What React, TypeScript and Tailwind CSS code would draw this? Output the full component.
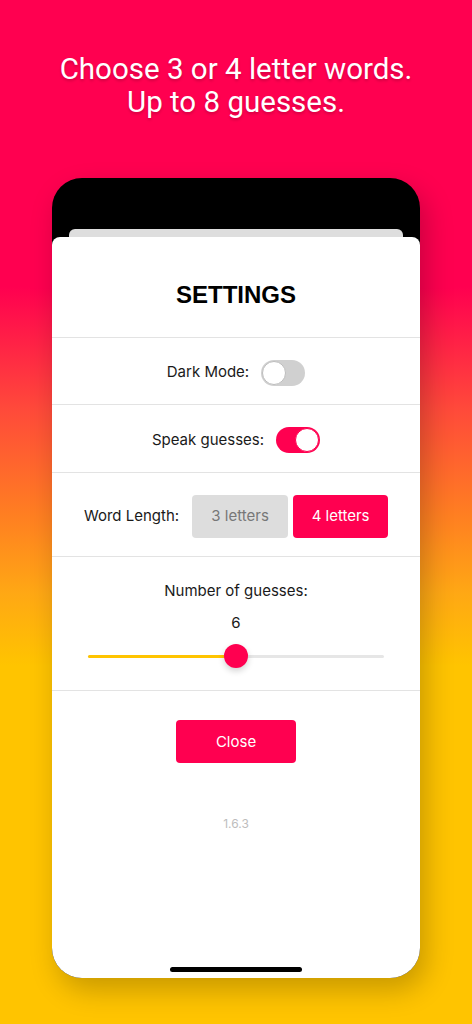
import React from 'react';

const PINK = 'bg-[#ff0050]';

const Toggle: React.FC<{ on?: boolean }> = ({ on = false }) => (
  <div
    className={`w-[44px] h-[26px] rounded-full flex items-center p-[1px] ${
      on ? `${PINK} justify-end` : 'bg-[#d0d0d0] justify-start'
    }`}
  >
    <div
      className={`w-[24px] h-[24px] rounded-full bg-white border ${
        on ? 'border-[#ff0050]' : 'border-[#bdbdbd]'
      }`}
    />
  </div>
);

const Row: React.FC<{ children: React.ReactNode; className?: string }> = ({ children, className = '' }) => (
  <div className={`flex items-center justify-center border-b border-[#e3e3e3] pt-[3px] ${className}`}>{children}</div>
);

export default function App() {
  const value = 6;
  const pct = 50;

  return (
    <div className="relative w-full h-[1024px] overflow-hidden bg-[linear-gradient(180deg,#ff0050_0%,#ff0050_28%,#ff4a3a_40%,#ff7d22_50%,#ffa814_58%,#ffc400_65%,#ffc400_100%)] font-['Inter',sans-serif]">
      <h1 className="pt-[53px] text-center text-white text-[29.5px] leading-[33px] font-['Roboto',sans-serif] [text-shadow:0_2px_3px_rgba(0,0,0,0.18)]">
        Choose 3 or 4 letter words.
        <br />
        Up to 8 guesses.
      </h1>

      <div className="mt-[59px] ml-[52px] w-[368px] h-[800px] rounded-[30px] bg-black overflow-hidden flex flex-col pt-[51px] shadow-[6px_12px_28px_rgba(0,0,0,0.22)]">
        <div className="mx-[17px] h-[8px] rounded-t-[6px] bg-[#dedede]" />
        <div className="flex-1 flex flex-col bg-white rounded-t-[8px] relative">
          <div className="h-[101px] flex items-end justify-center pb-[28px] border-b border-[#e3e3e3]">
            <h2 className="text-[24px] leading-[28px] font-bold text-black font-['Liberation_Sans',sans-serif]">SETTINGS</h2>
          </div>

          <Row className="h-[67px] gap-[12px]">
            <span className="text-[15px] text-[#1a1a1a]">Dark Mode:</span>
            <Toggle />
          </Row>

          <Row className="h-[68px] gap-[12px]">
            <span className="text-[15px] text-[#1a1a1a]">Speak guesses:</span>
            <Toggle on />
          </Row>

          <Row className="h-[84px]">
            <span className="text-[15px] text-[#1a1a1a] mr-[13px]">Word Length:</span>
            <button className="w-[96px] h-[43px] rounded-[4px] bg-[#dddddd] text-[15px] text-[#777777]">3 letters</button>
            <button className={`ml-[5px] w-[95px] h-[43px] rounded-[4px] ${PINK} text-[15px] text-white`}>4 letters</button>
          </Row>

          <div className="h-[134px] flex flex-col items-center border-b border-[#e3e3e3] pt-[24px]">
            <span className="text-[15px] leading-[20px] text-[#1a1a1a]">Number of guesses:</span>
            <span className="mt-[12px] text-[15px] leading-[20px] text-[#1a1a1a]">{value}</span>
            <div className="mt-[11px] w-[296px] h-[24px] relative flex items-center">
              <div className="w-full h-[3px] rounded-full bg-[#e6e6e6]">
                <div className="h-full rounded-full bg-[#ffc400]" style={{ width: `${pct}%` }} />
              </div>
              <div
                className={`absolute top-0 w-[24px] h-[24px] rounded-full ${PINK} shadow-[0_3px_6px_rgba(0,0,0,0.18)] -translate-x-1/2`}
                style={{ left: `${pct}%` }}
              />
            </div>
          </div>

          <div className="flex flex-col items-center pt-[29px]">
            <button className={`w-[120px] h-[43px] rounded-[4px] ${PINK} text-[15px] text-white pt-[2px]`}>Close</button>
            <span className="mt-[53px] text-[12px] leading-[16px] text-[#bdbdbd]">1.6.3</span>
          </div>

          <div className="absolute bottom-[6px] left-1/2 -translate-x-1/2 w-[132px] h-[5px] rounded-full bg-black" />
        </div>
      </div>
    </div>
  );
}
